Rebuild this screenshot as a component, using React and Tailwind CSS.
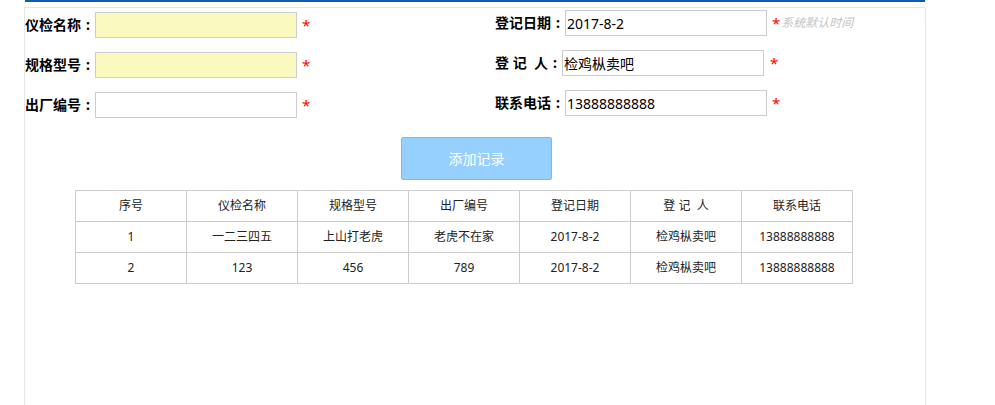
import React from "react";

const font = { fontFamily: '"Noto Sans", "Noto Sans CJK SC", sans-serif' };

function Field({ label, value = "", yellow, extra, starGap = "ml-[5px]" }) {
  return (
    <div className="flex items-center h-[26px]">
      <span className="text-[14px] font-bold text-black whitespace-pre leading-none">{label}</span>
      <span className="w-[14px] text-center text-[14px] font-bold text-black leading-none">:</span>
      <input
        readOnly
        value={value}
        className={`w-[202px] h-[26px] border border-[#ccc] px-[1px] text-[14px] text-black outline-none ${yellow ? "bg-[#fafac0]" : "bg-white"}`}
      />
      <span className={`${starGap} text-[#f00] text-[15px] leading-none`}>*</span>
      {extra}
    </div>
  );
}

const headers = ["序号", "仪检名称", "规格型号", "出厂编号", "登记日期", "登 记  人", "联系电话"];
const rows = [
  ["1", "一二三四五", "上山打老虎", "老虎不在家", "2017-8-2", "检鸡枞卖吧", "13888888888"],
  ["2", "123", "456", "789", "2017-8-2", "检鸡枞卖吧", "13888888888"],
];

export default function App() {
  return (
    <div className="w-[995px] h-[405px] overflow-hidden bg-white" style={font}>
      <div className="ml-[25px] w-[900px] h-[2px] bg-[#1658b5]" />
      <div className="ml-[24px] mt-[5px] w-[902px] h-[420px] border border-[#e6e6e6]">
        <div className="flex">
          <div className="w-[470px] pt-[4px] flex flex-col gap-[14px]">
            <Field label="仪检名称" yellow />
            <Field label="规格型号" yellow />
            <Field label="出厂编号" />
          </div>
          <div className="pt-[2px] flex flex-col gap-[14px]">
            <Field
              label="登记日期"
              value="2017-8-2"
              extra={<span className="ml-[1px] text-[12px] italic text-[#c4c4c4]">系统默认时间</span>}
            />
            <Field label="登 记  人" value="检鸡枞卖吧" starGap="ml-[6px]" />
            <Field label="联系电话" value="13888888888" />
          </div>
        </div>
        <div className="flex justify-center mt-[19px]">
          <button className="ml-[3px] w-[151px] h-[43px] bg-[#96d0ff] border border-[#7cb6f4] rounded-[2px] text-white text-[14px]">
            添加记录
          </button>
        </div>
        <table className="ml-[50px] mt-[10px] w-[778px] border-collapse text-[12px] text-[#222] table-fixed">
          <tbody>
            <tr className="h-[31px]">
              {headers.map((h) => (
                <td key={h} className="border border-[#ccc] text-center whitespace-pre">{h}</td>
              ))}
            </tr>
            {rows.map((r, i) => (
              <tr key={i} className="h-[31px]">
                {r.map((c, j) => (
                  <td key={j} className="border border-[#ccc] text-center">{c}</td>
                ))}
              </tr>
            ))}
          </tbody>
        </table>
      </div>
    </div>
  );
}
